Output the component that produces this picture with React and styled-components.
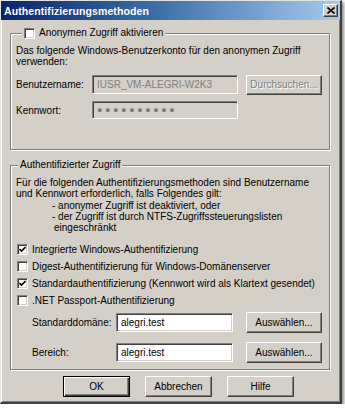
import React from "react";
import styled, { createGlobalStyle, css } from "styled-components";

const Global = createGlobalStyle`
  html, body { margin: 0; padding: 0; background: #ffffff; }
  body {
    font-family: "Liberation Sans", Arial, sans-serif;
    font-size: 10px;
    color: #000;
  }
  * { box-sizing: border-box; }
`;

const Window = styled.div`
  width: 342px;
  height: 404px;
  background: #d4d0c8;
  border-style: solid;
  border-width: 1px 2px 2px 1px;
  border-color: #e4e2dc #404040 #404040 #e4e2dc;
  box-shadow: inset 1px 1px #ffffff, inset -1px -1px #808080,
    2px 2px 3px rgba(0, 0, 0, 0.45);
  display: flex;
  flex-direction: column;
`;

const TitleBar = styled.div`
  height: 19px;
  display: flex;
  align-items: center;
  justify-content: space-between;
  padding: 0 2px 0 3px;
  background: linear-gradient(to right, #0a246a 0%, #3a6ea5 45%, #a6caf0 100%);
`;

const TitleText = styled.span`
  color: #fff;
  font-weight: bold;
  font-size: 10.5px;
  letter-spacing: 0.1px;
`;

const raised = css`
  border: 1px solid;
  border-color: #ffffff #404040 #404040 #ffffff;
  box-shadow: inset -1px -1px #808080;
  background: #d4d0c8;
`;

const CloseButton = styled.div`
  ${raised};
  width: 15px;
  height: 13px;
  display: flex;
  align-items: center;
  justify-content: center;
`;

const Body = styled.div`
  display: flex;
  flex-direction: column;
  padding: 0 10px 0 9px;
`;

const Group = styled.fieldset`
  margin: ${(p) => p.$top}px 0 0 0;
  height: ${(p) => p.$height}px;
  padding: 6px 6px 0 5px;
  border: 1px solid #808080;
  box-shadow: inset 1px 1px #ffffff, 1px 1px #ffffff;
  min-width: 0;
`;

const Legend = styled.legend`
  margin-left: ${(p) => p.$offset}px;
  padding: 0 2px;
  height: 12px;
  line-height: 12px;
  background: #d4d0c8;
  display: flex;
  align-items: center;
  gap: 4px;
`;

const Para = styled.div`
  line-height: 11.25px;
`;

const Indent = styled.div`
  padding-left: ${(p) => p.$pad}px;
`;

const Row = styled.div`
  display: flex;
  align-items: center;
  height: ${(p) => p.$h || 20}px;
  margin-top: ${(p) => p.$mt || 0}px;
  padding-left: ${(p) => p.$pl || 0}px;
`;

const Label = styled.span`
  width: ${(p) => p.$w}px;
  flex: none;
`;

const Input = styled.div`
  width: ${(p) => p.$w}px;
  height: ${(p) => p.$h || 19}px;
  flex: none;
  border: 1px solid;
  border-color: #808080 #ffffff #ffffff #808080;
  box-shadow: inset 1px 1px #404040, inset -1px -1px #d4d0c8;
  background: ${(p) => (p.$disabled ? "#d4d0c8" : "#ffffff")};
  color: ${(p) => (p.$disabled ? "#808080" : "#000")};
  display: flex;
  align-items: center;
  padding-left: 4px;
  font-size: 10px;
`;

const Dots = styled.span`
  font-size: 9px;
  letter-spacing: 2.6px;
  color: #7a7a7a;
`;

const Button = styled.div`
  ${raised};
  width: ${(p) => p.$w}px;
  height: ${(p) => p.$h || 20}px;
  margin-left: ${(p) => p.$ml || 0}px;
  flex: none;
  display: flex;
  align-items: center;
  justify-content: center;
  font-size: 10px;
  color: ${(p) => (p.$disabled ? "#808080" : "#000")};
  text-shadow: ${(p) => (p.$disabled ? "1px 1px #ffffff" : "none")};
  ${(p) =>
    p.$default &&
    css`
      border-color: #000;
      box-shadow: inset 1px 1px #ffffff, inset -1px -1px #404040,
        inset -2px -2px #808080;
    `}
`;

const Box = styled.span`
  width: 11px;
  height: 11px;
  flex: none;
  background: #fff;
  border: 1px solid;
  border-color: #808080 #ffffff #ffffff #808080;
  box-shadow: inset 1px 1px #404040, inset -1px -1px #d4d0c8;
  display: flex;
  align-items: center;
  justify-content: center;
`;

const CheckRow = styled.div`
  display: flex;
  align-items: center;
  gap: 4px;
  height: 17px;
  padding-left: 1px;
  margin-top: ${(p) => p.$mt || 0}px;
`;

const Footer = styled.div`
  display: flex;
  gap: 15px;
  padding-left: 53px;
  margin-top: 6px;
`;

const Check = ({ checked }) => (
  <Box>
    {checked && (
      <svg width="7" height="7" viewBox="0 0 7 7">
        <path d="M0.5 3 L2.5 5 L6.5 1" fill="none" stroke="#000" strokeWidth="1.6" />
      </svg>
    )}
  </Box>
);

export default function App() {
  return (
    <>
      <Global />
      <Window>
        <TitleBar>
          <TitleText>Authentifizierungsmethoden</TitleText>
          <CloseButton>
            <svg width="8" height="7" viewBox="0 0 8 7">
              <path d="M0.5 0.5 L7.5 6.5 M7.5 0.5 L0.5 6.5" stroke="#000" strokeWidth="1.6" />
            </svg>
          </CloseButton>
        </TitleBar>
        <Body>
          <Group $top={7} $height={123}>
            <Legend $offset={6}>
              <Check />
              <span>Anonymen Zugriff aktivieren</span>
            </Legend>
            <Para>
              Das folgende Windows-Benutzerkonto für den anonymen Zugriff
              <br />
              verwenden:
            </Para>
            <Row $mt={7}>
              <Label $w={76}>Benutzername:</Label>
              <Input $w={146} $h={19} $disabled>IUSR_VM-ALEGRI-W2K3</Input>
              <Button $w={76} $ml={8} $disabled>Durchsuchen...</Button>
            </Row>
            <Row $mt={6} $h={19}>
              <Label $w={76}>Kennwort:</Label>
              <Input $w={146} $h={18} $disabled>
                <Dots>●●●●●●●●●●</Dots>
              </Input>
            </Row>
          </Group>
          <Group $top={9} $height={211}>
            <Legend $offset={2}>Authentifizierter Zugriff</Legend>
            <Para>
              Für die folgenden Authentifizierungsmethoden sind Benutzername
              <br />
              und Kennwort erforderlich, falls Folgendes gilt:
              <Indent $pad={36}>- anonymer Zugriff ist deaktiviert, oder</Indent>
              <Indent $pad={36}>- der Zugriff ist durch NTFS-Zugriffssteuerungslisten</Indent>
              <Indent $pad={38}>eingeschränkt</Indent>
            </Para>
            <CheckRow $mt={8}>
              <Check checked />
              <span>Integrierte Windows-Authentifizierung</span>
            </CheckRow>
            <CheckRow>
              <Check />
              <span>Digest-Authentifizierung für Windows-Domänenserver</span>
            </CheckRow>
            <CheckRow>
              <Check checked />
              <span>Standardauthentifizierung (Kennwort wird als Klartext gesendet)</span>
            </CheckRow>
            <CheckRow>
              <Check />
              <span>.NET Passport-Authentifizierung</span>
            </CheckRow>
            <Row $mt={3} $pl={16} $h={21}>
              <Label $w={84}>Standarddomäne:</Label>
              <Input $w={117}>alegri.test</Input>
              <Button $w={76} $ml={13} $h={21}>Auswählen...</Button>
            </Row>
            <Row $mt={9} $pl={16} $h={21}>
              <Label $w={84}>Bereich:</Label>
              <Input $w={117}>alegri.test</Input>
              <Button $w={76} $ml={13} $h={21}>Auswählen...</Button>
            </Row>
          </Group>
          <Footer>
            <Button $w={67} $h={21} $default>OK</Button>
            <Button $w={67} $h={21}>Abbrechen</Button>
            <Button $w={67} $h={21}>Hilfe</Button>
          </Footer>
        </Body>
      </Window>
    </>
  );
}
